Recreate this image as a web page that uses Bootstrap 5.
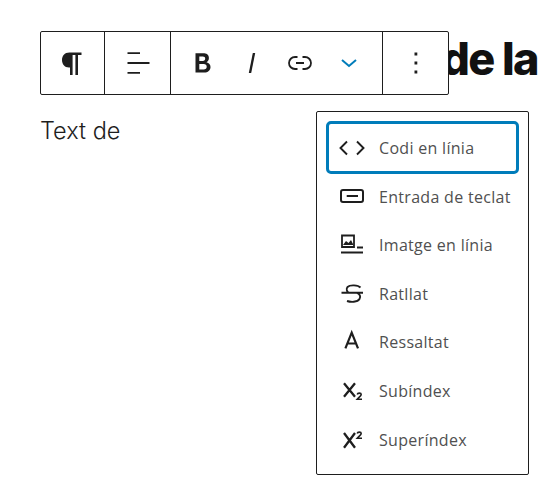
<!DOCTYPE html>
<html lang="ca">
<head>
<meta charset="utf-8">
<link href="https://cdn.jsdelivr.net/npm/bootstrap@5.3.0/dist/css/bootstrap.min.css" rel="stylesheet">
<style>
html,body{margin:0;height:498px;overflow:hidden;background:#fff}
.canvas{position:relative;width:545px;height:498px;padding:0 7px 0 40px;color:#111}
.head-line{font-family:Inter,sans-serif;font-weight:800;font-size:45px;line-height:60px;letter-spacing:-1.6px;margin:0;padding-top:29px;text-align:right;color:#111;white-space:nowrap}
.para-line{font-family:Inter,sans-serif;font-weight:300;font-size:23.5px;line-height:30px;margin:0;padding-top:27px;color:#1e1e1e}
.tbar{position:absolute;left:40px;top:31px;width:409px;height:64px;background:#fff;border:1px solid #1e1e1e;border-radius:2px}
.tgrp{border-right:1px solid #1e1e1e;height:100%}
.tgrp:last-child{border-right:0}
.g-block{width:64px;justify-content:center}
.g-align{width:66px;justify-content:center}
.g-format{width:212px;padding-left:8px}
.g-more{flex:1;justify-content:center}
.tbtn{width:48.5px;height:100%;padding:0;border:0;background:none;color:#1e1e1e;display:flex;align-items:center;justify-content:center}
.tbtn svg{width:32px;height:32px;flex:none}
.pop{position:absolute;left:316px;top:111px;width:213px;height:364px;background:#fff;border:1px solid #1e1e1e;border-radius:2px;padding:9px}
.mitem{height:48.6px;display:flex;align-items:center;font-family:"Open Sans",sans-serif;font-size:16px;letter-spacing:.3px;color:#505050;border:0;background:none;padding:1px 0 0 12px;width:100%;white-space:nowrap;border-radius:5px}
.mitem svg{width:28px;height:28px;flex:none;margin-right:13px;color:#1e1e1e}
.mitem.on{height:53px;border:3px solid #007cba;padding-left:9px;margin-bottom:-2.2px}
</style>
</head>
<body>
<div class="canvas">
  <h1 class="head-line">Títol de la</h1>
  <p class="para-line">Text de</p>

  <div class="tbar d-flex">
    <div class="tgrp d-flex g-block">
      <button class="tbtn" aria-label="Paràgraf"><svg viewBox="0 0 32 32" fill="currentColor"><path d="M24.500 5.500H12.500C7.500 5.500 5 9 5 13c0 4 2.500 7.500 7 7.500h1v7.500h2.600V8h2.800v20H21V8h3.500z"/></svg></button>
    </div>
    <div class="tgrp d-flex g-align">
      <button class="tbtn" aria-label="Alinea"><svg viewBox="0 0 32 32" fill="currentColor"><path d="M5.500 5.300H18v1.800H5.500zM5.500 15.100h22v1.800h-22zM5.500 25h12.500v1.800H5.500z"/></svg></button>
    </div>
    <div class="tgrp d-flex g-format">
      <button class="tbtn" aria-label="Negreta"><svg viewBox="0 0 32 32" fill="currentColor"><path d="M19.500 15.300c1.500-.9 2.400-2.300 2.400-4.300 0-3.300-2.500-4.700-5.700-4.700H8.500v19.300h8.800c3.500 0 6.200-2 6.200-5.500 0-2.500-1.500-4.100-4-4.800zM12.300 9.500h3.500c1.600 0 2.400.7 2.400 2.100 0 1.500-.8 2.300-2.400 2.300h-3.500zm4.400 13h-4.400v-5.600h4.400c1.900 0 3 1 3 2.800 0 1.800-1.100 2.800-3 2.800z"/></svg></button>
      <button class="tbtn" aria-label="Cursiva"><svg viewBox="0 0 32 32" fill="currentColor"><path d="M16.800 6h2.400l-4 20h-2.400z"/></svg></button>
      <button class="tbtn" aria-label="Enllaç"><svg viewBox="0 0 32 32" fill="none" stroke="currentColor" stroke-width="1.800"><path d="M13.500 10H11a6 6 0 0 0 0 12h2.500M18.500 10H21a6 6 0 0 1 0 12h-2.500M12 16h8"/></svg></button>
      <button class="tbtn" aria-label="Més"><svg viewBox="0 0 32 32" fill="none" stroke="#007cba" stroke-width="2"><path d="M9 13l7 6 7-6"/></svg></button>
    </div>
    <div class="tgrp d-flex g-more">
      <button class="tbtn" aria-label="Opcions"><svg viewBox="0 0 32 32" fill="currentColor"><path d="M14.500 5.500h2.800v3h-2.800zM14.500 14.500h2.800v3h-2.800zM14.500 23.500h2.800v3h-2.800z"/></svg></button>
    </div>
  </div>

  <div class="pop d-flex flex-column">
    <button class="mitem on"><svg viewBox="0 0 28 28" fill="none" stroke="currentColor" stroke-width="1.900"><path d="M9 7.500l-6.500 6.500 6.500 6.500M19 7.500l6.500 6.500-6.500 6.500"/></svg>Codi en línia</button>
    <button class="mitem"><svg viewBox="0 0 28 28" fill="none" stroke="currentColor" stroke-width="2"><rect x="3" y="7" width="22" height="12" rx="2"/><path d="M8.700 13H20"/></svg>Entrada de teclat</button>
    <button class="mitem"><svg viewBox="0 0 28 28" fill="none" stroke="currentColor" stroke-width="1.800"><path d="M4 4.500h12v11.500H4zM3 21.500h22M19 16.500h6"/><path d="M5 14l3-4 2.500 2 2.500-3 2.500 5z" fill="currentColor" stroke="none"/></svg>Imatge en línia</button>
    <button class="mitem"><svg viewBox="0 0 28 28" fill="none" stroke="currentColor" stroke-width="1.900"><path d="M22.500 7.500C20 5 12 4.500 9.500 7c-1.500 2-.5 4.500 1 5.700M18.500 12.700c3.500 1.300 4.500 3.800 3 6.300-2 3.500-9 3.200-12.500 2M3.500 12.700h21.500"/></svg>Ratllat</button>
    <button class="mitem"><svg viewBox="0 0 28 28" fill="none" stroke="currentColor" stroke-width="2.200"><path d="M7.400 20.400l6.300-15.800 6.300 15.800M9.700 15.500h8"/></svg>Ressaltat</button>
    <button class="mitem"><svg viewBox="0 0 28 28" fill="none" stroke="currentColor"><path d="M6 6.300l11 13.400M17 6.300L6 19.700" stroke-width="2.300"/><path d="M19.200 17.500c.4-1.800 4-1.800 4 .1 0 1.400-2 2.400-4 4.700h4.800" stroke-width="1.600"/></svg>Subíndex</button>
    <button class="mitem"><svg viewBox="0 0 28 28" fill="none" stroke="currentColor"><path d="M6 7l11 14.700M17 7L6 21.700" stroke-width="2.300"/><path d="M19.200 7.500c.4-1.800 4-1.800 4 .1 0 1.400-2 2.400-4 4.700h4.800" stroke-width="1.600"/></svg>Superíndex</button>
  </div>
</div>
<script src="https://cdn.jsdelivr.net/npm/bootstrap@5.3.0/dist/js/bootstrap.bundle.min.js"></script>
</body>
</html>
